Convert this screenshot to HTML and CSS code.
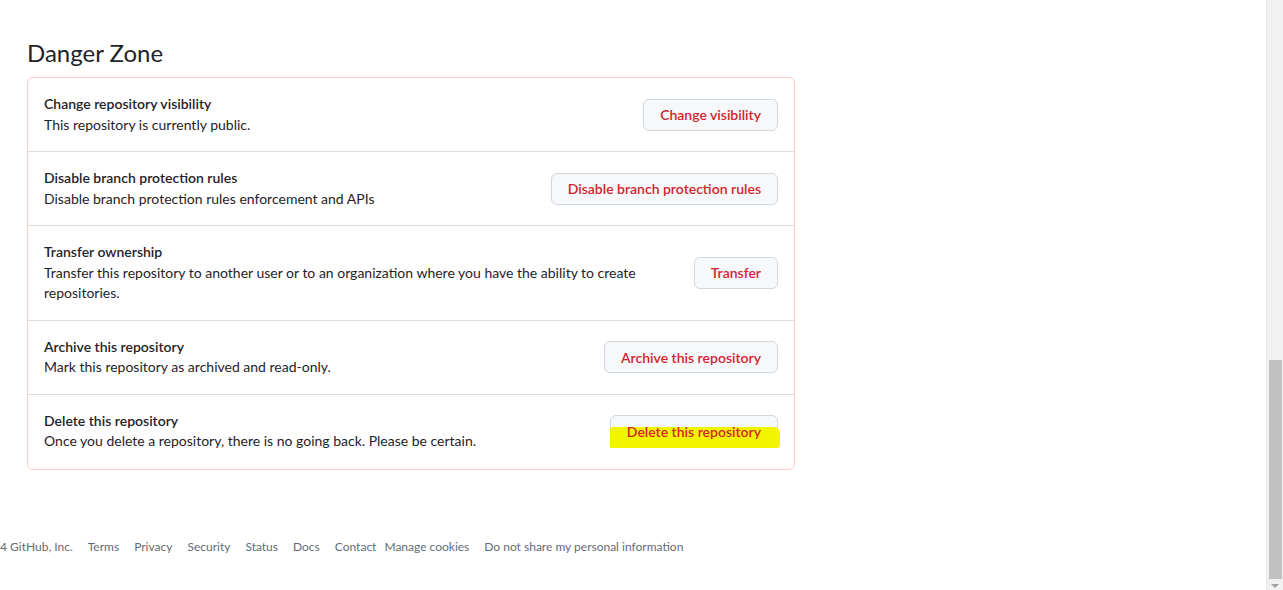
FILE: index.html
```html
<!DOCTYPE html>
<html lang="en">
<head>
  <meta charset="UTF-8" />
  <meta name="viewport" content="width=device-width, initial-scale=1.0"/>
  <title>Settings · Danger Zone</title>
  <link rel="stylesheet" href="styles.css">
</head>
<body>

  <div class="page">
    <main class="settings">
      <h2 class="subhead">Danger Zone</h2>

      <div class="danger-box">
        <div class="danger-row">
          <div class="danger-text">
            <strong>Change repository visibility</strong>
            <p>This repository is currently public.</p>
          </div>
          <button class="btn-danger">Change visibility</button>
        </div>

        <div class="danger-row">
          <div class="danger-text">
            <strong>Disable branch protection rules</strong>
            <p>Disable branch protection rules enforcement and APIs</p>
          </div>
          <button class="btn-danger">Disable branch protection rules</button>
        </div>

        <div class="danger-row">
          <div class="danger-text">
            <strong>Transfer ownership</strong>
            <p>Transfer this repository to another user or to an organization where you have the ability to create repositories.</p>
          </div>
          <button class="btn-danger">Transfer</button>
        </div>

        <div class="danger-row">
          <div class="danger-text">
            <strong>Archive this repository</strong>
            <p>Mark this repository as archived and read-only.</p>
          </div>
          <button class="btn-danger">Archive this repository</button>
        </div>

        <div class="danger-row">
          <div class="danger-text">
            <strong>Delete this repository</strong>
            <p>Once you delete a repository, there is no going back. Please be certain.</p>
          </div>
          <button class="btn-danger highlighted">
            <span class="marker"></span>
            <span class="btn-label">Delete this repository</span>
          </button>
        </div>
      </div>
    </main>

    <footer class="site-footer">
      <span class="copy">4 GitHub, Inc.</span>
      <a href="#">Terms</a>
      <a href="#">Privacy</a>
      <a href="#">Security</a>
      <a href="#">Status</a>
      <a href="#">Docs</a>
      <a href="#" class="tight">Contact</a>
      <a href="#">Manage cookies</a>
      <a href="#">Do not share my personal information</a>
    </footer>
  </div>

  <div class="scrollbar">
    <div class="scroll-thumb"></div>
    <div class="scroll-arrow"></div>
  </div>

</body>
</html>
```

FILE: styles.css
```css
* {
  margin: 0; padding: 0; box-sizing: border-box;
  font-family: 'Lato', 'Segoe UI', sans-serif;
}

body {
  background: #fff;
  color: #1f2328;
  font-size: 14px;
  line-height: 20.5px;
  display: flex;
  height: 590px;
  overflow: hidden;
}

.page {
  flex: 1;
}

.settings {
  width: 795px;
  padding: 35px 0 0 27px;
}

.subhead {
  font-size: 24px;
  font-weight: 400;
  line-height: 36px;
  margin-bottom: 6px;
}

.danger-box {
  border: 1px solid #ffcecb;
  border-radius: 6px;
}

.danger-row {
  display: flex;
  align-items: center;
  gap: 24px;
  padding: 16px;
  border-top: 1px solid #d8dee4;
}

.danger-row:first-child {
  border-top: none;
}

.danger-row:last-child {
  padding-bottom: 17px;
}

.danger-text {
  flex: 1;
}

.danger-text strong {
  font-weight: 600;
}

.btn-danger {
  position: relative;
  height: 32px;
  padding: 0 16px;
  font-size: 14px;
  font-weight: 600;
  color: #d1242f;
  background: #f6f8fa;
  border: 1px solid #d0d7de;
  border-radius: 6px;
  white-space: nowrap;
  cursor: pointer;
}

.btn-label {
  position: relative;
}

/* yellow highlighter stroke over the delete button */
.marker {
  position: absolute;
  left: -1px;
  right: -3px;
  top: 11px;
  bottom: -2px;
  background: #f2f500;
  border-radius: 2px 6px 3px 2px;
}

.site-footer {
  display: flex;
  gap: 15px;
  margin-top: 68px;
  font-size: 12px;
  line-height: 18px;
  color: #636c76;
}

.site-footer a {
  color: #636c76;
  text-decoration: none;
}

.site-footer a.tight {
  margin-right: -7px;
}

.scrollbar {
  width: 17px;
  background: #f1f1f1;
  border-left: 1px solid #e8e8e8;
  display: flex;
  flex-direction: column;
  justify-content: flex-end;
  align-items: center;
  padding-bottom: 2px;
}

.scroll-thumb {
  width: 13px;
  height: 219px;
  background: #c1c1c1;
  margin-bottom: 5px;
}

.scroll-arrow {
  width: 0;
  height: 0;
  border-left: 4px solid transparent;
  border-right: 4px solid transparent;
  border-top: 4px solid #a3a3a3;
}
```
